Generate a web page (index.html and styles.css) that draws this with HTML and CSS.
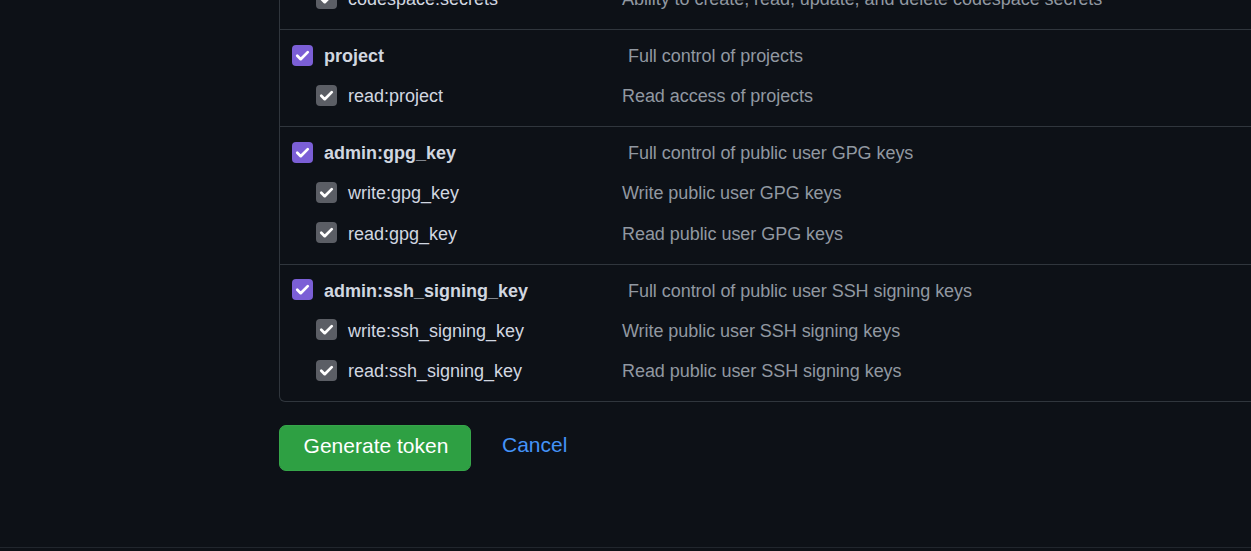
FILE: index.html
```html
<!DOCTYPE html>
<html lang="en">
<head>
<meta charset="utf-8">
<title>Scopes</title>
<link rel="stylesheet" href="styles.css">
</head>
<body>
<main class="page">
  <section class="scopes">
    <div class="group group-cut">
      <div class="row child">
        <span class="cb cb-gray"><svg viewBox="0 0 20 20"><path d="M5 10.2l3.3 3.3L15 6.8"/></svg></span>
        <span class="label">codespace:secrets</span>
        <span class="desc">Ability to create, read, update, and delete codespace secrets</span>
      </div>
    </div>

    <div class="group">
      <div class="row parent">
        <span class="cb cb-purple"><svg viewBox="0 0 20 20"><path d="M5 10.2l3.3 3.3L15 6.8"/></svg></span>
        <span class="label">project</span>
        <span class="desc">Full control of projects</span>
      </div>
      <div class="row child">
        <span class="cb cb-gray"><svg viewBox="0 0 20 20"><path d="M5 10.2l3.3 3.3L15 6.8"/></svg></span>
        <span class="label">read:project</span>
        <span class="desc">Read access of projects</span>
      </div>
    </div>

    <div class="group">
      <div class="row parent">
        <span class="cb cb-purple"><svg viewBox="0 0 20 20"><path d="M5 10.2l3.3 3.3L15 6.8"/></svg></span>
        <span class="label">admin:gpg_key</span>
        <span class="desc">Full control of public user GPG keys</span>
      </div>
      <div class="row child">
        <span class="cb cb-gray"><svg viewBox="0 0 20 20"><path d="M5 10.2l3.3 3.3L15 6.8"/></svg></span>
        <span class="label">write:gpg_key</span>
        <span class="desc">Write public user GPG keys</span>
      </div>
      <div class="row child">
        <span class="cb cb-gray"><svg viewBox="0 0 20 20"><path d="M5 10.2l3.3 3.3L15 6.8"/></svg></span>
        <span class="label">read:gpg_key</span>
        <span class="desc">Read public user GPG keys</span>
      </div>
    </div>

    <div class="group">
      <div class="row parent">
        <span class="cb cb-purple"><svg viewBox="0 0 20 20"><path d="M5 10.2l3.3 3.3L15 6.8"/></svg></span>
        <span class="label">admin:ssh_signing_key</span>
        <span class="desc">Full control of public user SSH signing keys</span>
      </div>
      <div class="row child">
        <span class="cb cb-gray"><svg viewBox="0 0 20 20"><path d="M5 10.2l3.3 3.3L15 6.8"/></svg></span>
        <span class="label">write:ssh_signing_key</span>
        <span class="desc">Write public user SSH signing keys</span>
      </div>
      <div class="row child">
        <span class="cb cb-gray"><svg viewBox="0 0 20 20"><path d="M5 10.2l3.3 3.3L15 6.8"/></svg></span>
        <span class="label">read:ssh_signing_key</span>
        <span class="desc">Read public user SSH signing keys</span>
      </div>
    </div>
  </section>

  <div class="actions">
    <button class="btn-primary" type="button">Generate token</button>
    <a class="cancel" href="#">Cancel</a>
  </div>
</main>
<footer class="footer"></footer>
</body>
</html>
```

FILE: styles.css
```css
html, body {
  margin: 0;
  padding: 0;
  background: #0d1117;
  overflow: hidden;
  height: 100%;
}

body {
  font-family: "Liberation Sans", Arial, sans-serif;
  color: #d1d7e0;
}

.page {
  display: flow-root;
  padding-left: 279px;
  height: 547px;
  box-sizing: border-box;
}

.scopes {
  width: 1100px;
  margin-top: -22px;
  border: 1px solid #30363d;
  border-top: none;
  border-radius: 0 0 0 6px;
}

.group {
  padding: 5px 0 10.5px 12px;
  border-top: 1px solid #30363d;
}

.group-cut {
  border-top: none;
  padding-top: 0;
}

.row {
  display: flex;
  align-items: center;
  font-size: 18px;
  line-height: 22px;
}

.row.parent {
  height: 40px;
}

.row.child {
  height: 40.5px;
  padding-left: 24px;
}

.cb {
  width: 21px;
  height: 21px;
  border-radius: 4px;
  flex: none;
  display: flex;
}

.cb svg {
  width: 21px;
  height: 21px;
  fill: none;
  stroke: #ffffff;
  stroke-width: 2.6;
  stroke-linecap: round;
  stroke-linejoin: round;
}

.cb-purple {
  background: #7b5fd6;
}

.cb-gray {
  background: #5b5e65;
}

.label,
.desc {
  padding-top: 2px;
}

.label {
  margin-left: 11px;
  color: #d1d7e0;
}

.parent .label {
  width: 304px;
  font-weight: bold;
}

.child .label {
  width: 274px;
}

.desc {
  color: #9198a1;
  white-space: nowrap;
  letter-spacing: -0.05px;
}

.actions {
  display: flex;
  align-items: flex-start;
  margin-top: 23px;
  gap: 31px;
}

.btn-primary {
  font-family: "Liberation Sans", Arial, sans-serif;
  font-size: 21px;
  line-height: 24px;
  color: #ffffff;
  background: #2ea043;
  border: 1px solid #36a64a;
  border-radius: 7px;
  height: 46px;
  width: 192px;
  padding: 0 0 5px 2px;
  cursor: pointer;
}

.cancel {
  font-size: 21px;
  line-height: 24px;
  padding-top: 8px;
  color: #4493f8;
  text-decoration: none;
}

.footer {
  border-top: 1px solid #21262d;
  height: 10px;
}
```
